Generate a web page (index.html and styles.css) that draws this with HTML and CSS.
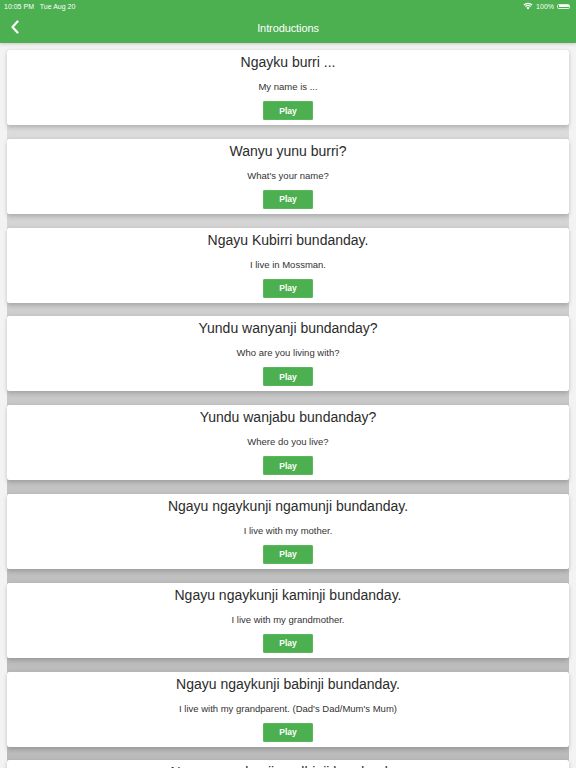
FILE: index.html
```html
<!DOCTYPE html>
<html>
<head>
<meta charset="utf-8">
<link rel="stylesheet" href="styles.css">
</head>
<body>
<header class="topbar">
  <div class="status">
    <span class="time">10:05 PM&nbsp;&nbsp;&nbsp;Tue Aug 20</span>
    <span class="status-right">
      <svg class="wifi" width="10" height="8" viewBox="0 0 10 8"><path d="M5 7.6 L3.4 5.8 A2.3 2.3 0 0 1 6.6 5.8 Z" fill="#fff"/><path d="M2.3 4.6 A3.9 3.9 0 0 1 7.7 4.6" stroke="#fff" stroke-width="1.2" fill="none"/><path d="M0.8 3 A6 6 0 0 1 9.2 3" stroke="#fff" stroke-width="1.2" fill="none"/></svg>
      <span class="pct">100%</span>
      <span class="battery"><span class="battery-fill"></span></span>
    </span>
  </div>
  <div class="nav">
    <svg class="back" width="10" height="14" viewBox="0 0 10 14"><path d="M7.5 1.5 L2.5 7 L7.5 12.5" stroke="#fff" stroke-width="2.2" fill="none" stroke-linecap="round" stroke-linejoin="round"/></svg>
    <span class="nav-title">Introductions</span>
  </div>
</header>
<main class="list">
  <section class="card"><h2 class="title">Ngayku burri ...</h2><p class="sub">My name is ...</p><button class="play">Play</button></section>
  <section class="card"><h2 class="title">Wanyu yunu burri?</h2><p class="sub">What's your name?</p><button class="play">Play</button></section>
  <section class="card"><h2 class="title">Ngayu Kubirri bundanday.</h2><p class="sub">I live in Mossman.</p><button class="play">Play</button></section>
  <section class="card"><h2 class="title">Yundu wanyanji bundanday?</h2><p class="sub">Who are you living with?</p><button class="play">Play</button></section>
  <section class="card"><h2 class="title">Yundu wanjabu bundanday?</h2><p class="sub">Where do you live?</p><button class="play">Play</button></section>
  <section class="card"><h2 class="title">Ngayu ngaykunji ngamunji bundanday.</h2><p class="sub">I live with my mother.</p><button class="play">Play</button></section>
  <section class="card"><h2 class="title">Ngayu ngaykunji kaminji bundanday.</h2><p class="sub">I live with my grandmother.</p><button class="play">Play</button></section>
  <section class="card"><h2 class="title">Ngayu ngaykunji babinji bundanday.</h2><p class="sub">I live with my grandparent. (Dad's Dad/Mum's Mum)</p><button class="play">Play</button></section>
  <section class="card"><h2 class="title">Ngayu ngaykunji ngalbinji bundanday.</h2><p class="sub">I live with my grandfather.</p><button class="play">Play</button></section>
</main>
</body>
</html>
```

FILE: styles.css
```css
html, body {
  margin: 0;
  padding: 0;
}
body {
  width: 576px;
  height: 768px;
  overflow: hidden;
  background: #f3f3f3;
  font-family: "Liberation Sans", Arial, sans-serif;
}
.topbar {
  background: #4caf50;
  height: 43px;
  display: flex;
  flex-direction: column;
  box-shadow: 0 1px 3px rgba(0,0,0,0.18);
  position: relative;
  z-index: 2;
}
.status {
  height: 12px;
  display: flex;
  align-items: center;
  justify-content: space-between;
  padding: 0 4px 0 4px;
  color: #fff;
  font-size: 7px;
}
.time {
  padding-top: 0;
}
.status-right {
  display: flex;
  align-items: center;
  gap: 3px;
}
.wifi {
  display: block;
}
.battery {
  width: 13px;
  height: 5px;
  border: 1px solid rgba(255,255,255,0.8);
  border-radius: 1.5px;
  padding: 0.5px;
  box-sizing: border-box;
  display: flex;
  margin-right: 2px;
}
.battery-fill {
  flex: 1;
  background: #fff;
  border-radius: 0.5px;
}
.nav {
  flex: 1;
  display: flex;
  align-items: center;
  justify-content: center;
  position: relative;
}
.back {
  position: absolute;
  left: 10px;
  top: 8px;
}
.nav-title {
  color: #fff;
  font-size: 11px;
  letter-spacing: -0.1px;
}
.list {
  margin: 7px 7px 0 7px;
  display: flex;
  flex-direction: column;
  gap: 13.8px;
  background: linear-gradient(#e2e2e2 0px, #d4d4d4 180px, #c6c6c6 380px, #bdbdbd 600px, #bbbbbb 720px);
}
.card {
  background: #fff;
  border-radius: 2px;
  height: 75px;
  box-sizing: border-box;
  padding-top: 4px;
  display: flex;
  flex-direction: column;
  align-items: center;
  box-shadow: 0 3px 4px rgba(0,0,0,0.14), 0 0 4px rgba(0,0,0,0.08);
  flex-shrink: 0;
}
.title {
  margin: 0;
  font-size: 14px;
  line-height: 16px;
  font-weight: normal;
  color: #2b2b2b;
}
.sub {
  margin: 11px 0 0 0;
  font-size: 9.5px;
  line-height: 12px;
  color: #333;
}
.play {
  margin-top: 8px;
  width: 50px;
  height: 19px;
  border: 1px solid #59b85c;
  border-radius: 1px;
  background: #4caf50;
  color: #fff;
  font-family: "Liberation Sans", Arial, sans-serif;
  font-size: 8.5px;
  font-weight: bold;
  padding: 0;
}
```
